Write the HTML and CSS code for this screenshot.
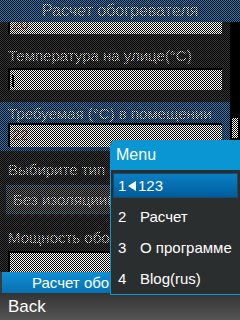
FILE: index.html
```html
<!DOCTYPE html>
<html lang="ru">
<head>
    <meta charset="UTF-8">
    <meta name="viewport" content="width=device-width, initial-scale=1.0">
    <title>Расчет обогревателя</title>
    <link rel="stylesheet" href="styles.css">
</head>
<body>
<div class="phone">
    <!-- Screen under the menu -->
    <div class="screen">
        <div class="title">Расчет обогревателя</div>
        <div class="content">
            <div class="form">
                <div class="input">20</div>
                <div class="label">Температура на улице(°C)</div>
                <div class="input"><span class="caret"></span></div>
                <div class="field active">
                    <div class="label">Требуемая (°C) в помещении</div>
                    <div class="input">22</div>
                </div>
                <div class="label">Выбирите тип изоляции</div>
                <div class="combo">Без изоляции(стены)</div>
                <div class="label">Мощность обогревателя</div>
                <div class="input"></div>
            </div>
            <div class="scrollbar"><div class="thumb"></div></div>
        </div>
        <button class="calc-btn">Расчет обогревателя</button>

        <!-- dim overlay -->
        <svg class="dim" width="240" height="272">
            <defs>
                <pattern id="dots" width="2" height="2" patternUnits="userSpaceOnUse">
                    <rect x="0" y="0" width="1" height="1" fill="#000"/>
                    <rect x="1" y="1" width="1" height="1" fill="#000"/>
                </pattern>
            </defs>
            <rect width="240" height="272" fill="url(#dots)" shape-rendering="crispEdges"/>
        </svg>
    </div>

    <!-- Popup menu -->
    <div class="menu">
        <div class="menu-title">Menu</div>
        <div class="menu-item selected"><span class="num">1</span><span class="arrow"></span>123</div>
        <div class="menu-item"><span class="num">2</span>Расчет</div>
        <div class="menu-item"><span class="num">3</span>О программе</div>
        <div class="menu-item"><span class="num">4</span>Blog(rus)</div>
    </div>

    <!-- Softkeys -->
    <div class="softkeys">Back</div>
</div>
</body>
</html>
```

FILE: styles.css
```css
/* Global styles */
* {
    margin: 0;
    padding: 0;
    box-sizing: border-box;
}

body {
    font-family: "Liberation Sans", Arial, sans-serif;
    background-color: #000;
    color: white;
}

.phone {
    position: relative;
    width: 240px;
    height: 320px;
    overflow: hidden;
    display: flex;
    flex-direction: column;
}

/* Screen */
.screen {
    position: relative;
    height: 293px;
    background-color: #3a3a3a;
}

.title {
    height: 22px;
    background-color: #0a84c4;
    font-size: 16px;
    line-height: 22px;
    text-align: center;
}

.content {
    display: flex;
    height: 250px;
    overflow: hidden;
}

/* form is scrolled a little, first box hides under the title */
.form {
    width: 230px;
    margin-top: -10px;
}

.label {
    font-size: 15px;
    height: 34px;
    line-height: 20px;
    padding: 12px 0 0 8px;
    white-space: nowrap;
    overflow: hidden;
}

.input {
    margin-left: 8px;
    width: 214px;
    height: 22px;
    background-color: #fff;
    border-top: 2px solid #000;
    border-left: 2px solid #000;
    color: #e07020;
    font-size: 15px;
    line-height: 20px;
    padding-left: 2px;
}

.caret {
    display: inline-block;
    width: 2px;
    height: 12px;
    margin-top: 5px;
    background-color: #000;
}

.field {
    margin: 12px 0 0 0;
    padding-bottom: 4px;
    background-color: #0a84c4;
}

.field .label {
    height: 21px;
    padding-top: 2px;
}

.field .input {
    height: 24px;
}

.combo {
    margin-left: 6px;
    height: 29px;
    border: 1px solid #1a8ad0;
    background-color: #6a6a6a;
    font-size: 15px;
    line-height: 27px;
    padding-left: 6px;
    white-space: nowrap;
    overflow: hidden;
}

.field + .label {
    padding-top: 9px;
}

.combo + .label {
    padding-top: 14px;
    height: 37px;
}

.scrollbar {
    width: 10px;
    background-color: #000;
    padding-top: 96px;
}

.thumb {
    margin-left: 2px;
    width: 6px;
    height: 20px;
    background-color: #fff;
}

.calc-btn {
    display: block;
    margin-left: 2px;
    width: 228px;
    height: 21px;
    border: none;
    background: linear-gradient(#1090d4, #0670b0);
    color: white;
    font-family: "Liberation Sans", Arial, sans-serif;
    font-size: 15px;
    text-align: left;
    padding-left: 30px;
}

.dim {
    position: absolute;
    left: 0;
    top: 0;
}

/* Menu */
.menu {
    position: absolute;
    left: 110px;
    top: 140px;
    width: 130px;
    height: 155px;
    background-color: #2b2e2e;
    border-left: 1px solid #0a96d2;
    border-bottom: 1px solid #0a96d2;
    border-top-left-radius: 6px;
    overflow: hidden;
}

.menu-title {
    height: 30px;
    background-color: #0a96d2;
    font-size: 16px;
    line-height: 30px;
    padding-left: 5px;
}

.menu-item {
    height: 31px;
    display: flex;
    align-items: center;
    font-size: 15px;
    padding-left: 7px;
}

.menu-item .num {
    width: 22px;
}

.menu-item.selected {
    height: 25px;
    margin: 3px 2px;
    padding-left: 4px;
    background: linear-gradient(#0a80c4, #005d9c);
    border: 1px solid #1a4a6a;
}

.menu-item.selected .num {
    width: 10px;
}

.arrow {
    width: 0;
    height: 0;
    border-top: 5px solid transparent;
    border-bottom: 5px solid transparent;
    border-right: 8px solid white;
    margin-right: 2px;
}

/* Softkeys */
.softkeys {
    height: 27px;
    background: linear-gradient(#333, #555);
    font-size: 17px;
    line-height: 27px;
    padding-left: 8px;
}
```
